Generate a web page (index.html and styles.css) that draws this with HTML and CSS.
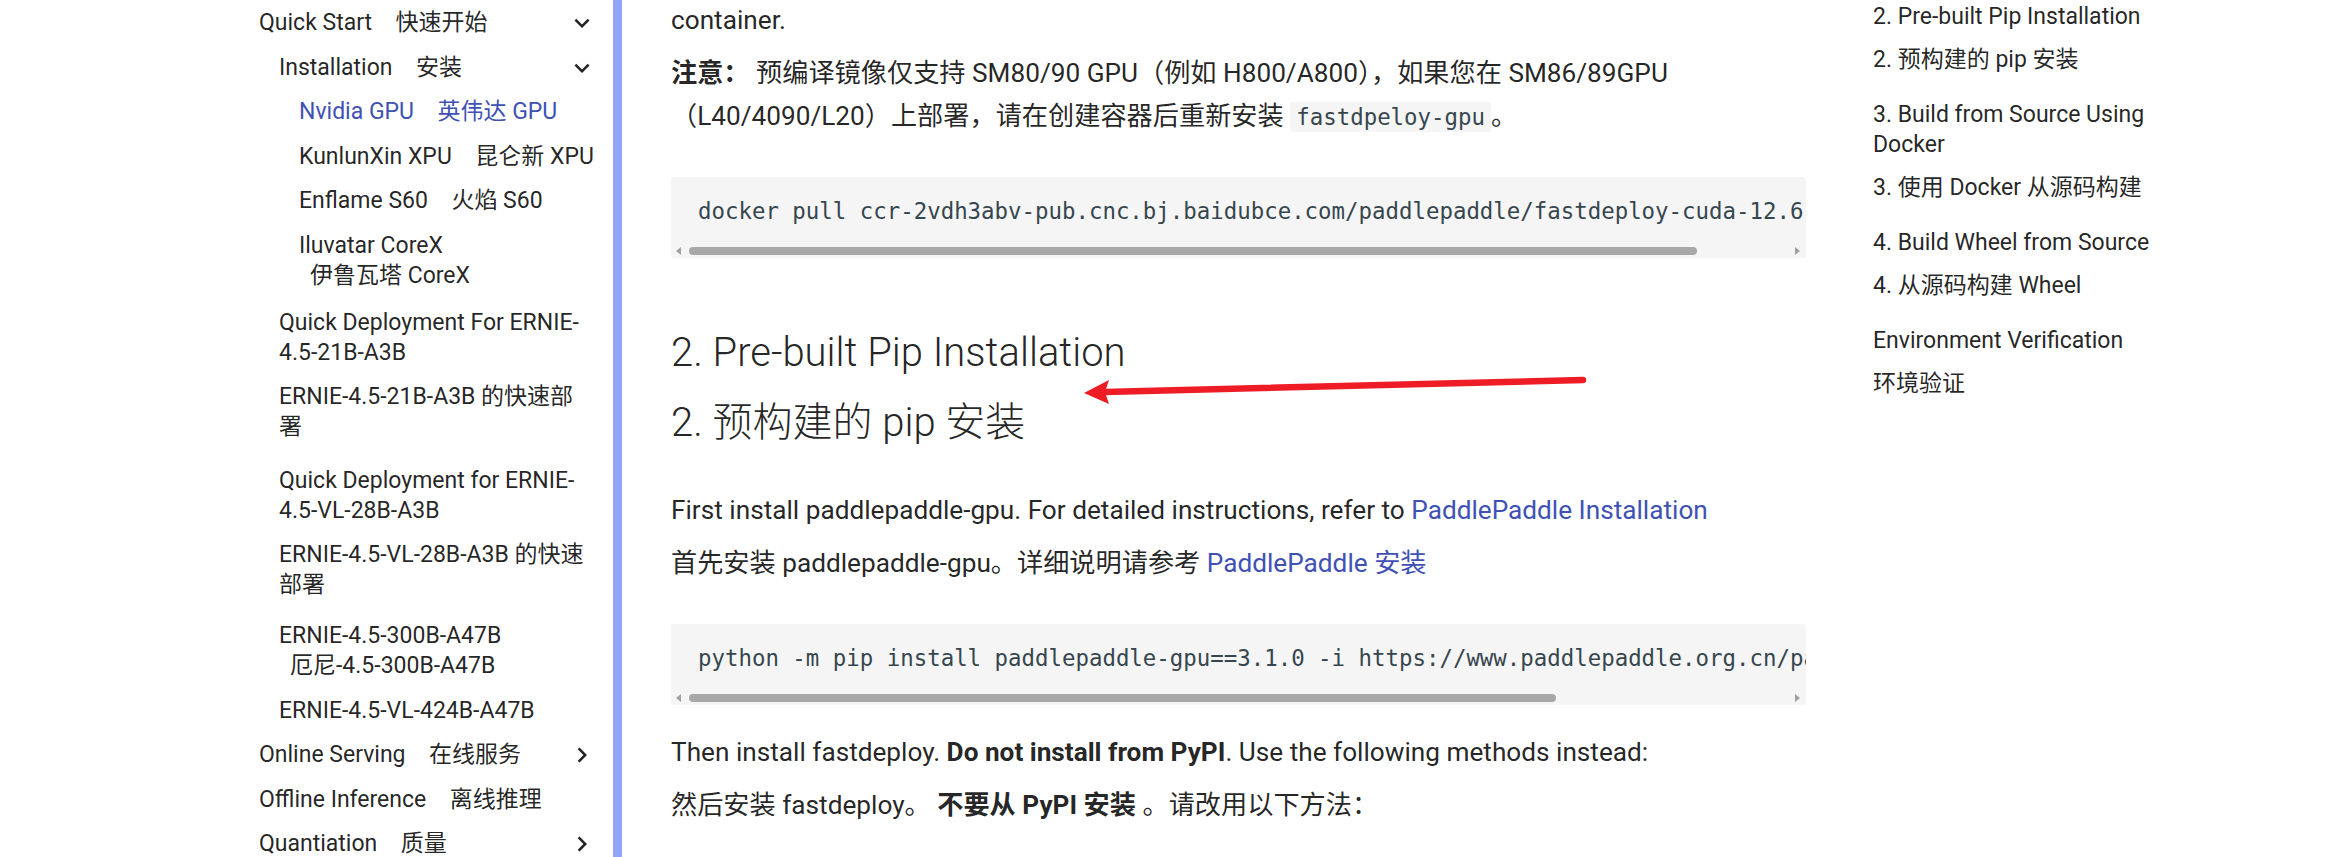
FILE: index.html
```html
<!DOCTYPE html>
<html lang="en">
<head>
<meta charset="utf-8">
<title>FastDeploy - Nvidia GPU</title>
<link rel="stylesheet" href="styles.css">
</head>
<body>
<div class="page">
  <div class="gutter"></div>

  <nav class="sidebar">
    <ul class="nav-list">
      <li class="nav-item">
        <div class="nav-link"><span class="label">Quick Start&emsp;快速开始</span>
          <svg class="chev" viewBox="0 0 24 24"><path d="M7.41 8.58 12 13.17l4.59-4.59L18 10l-6 6-6-6 1.41-1.42Z"/></svg></div>
        <ul class="nav-list sub">
          <li class="nav-item">
            <div class="nav-link"><span class="label">Installation&emsp;安装</span>
              <svg class="chev" viewBox="0 0 24 24"><path d="M7.41 8.58 12 13.17l4.59-4.59L18 10l-6 6-6-6 1.41-1.42Z"/></svg></div>
            <ul class="nav-list sub">
              <li class="nav-item"><div class="nav-link active"><span class="label">Nvidia GPU&emsp;英伟达 GPU</span></div></li>
              <li class="nav-item"><div class="nav-link"><span class="label">KunlunXin XPU&emsp;昆仑新 XPU</span></div></li>
              <li class="nav-item"><div class="nav-link"><span class="label">Enflame S60&emsp;火焰 S60</span></div></li>
              <li class="nav-item"><div class="nav-link"><span class="label">Iluvatar CoreX<br><span class="ind">伊鲁瓦塔 CoreX</span></span></div></li>
            </ul>
          </li>
          <li class="nav-item pair">
            <div class="nav-link"><span class="label">Quick Deployment For ERNIE-<br>4.5-21B-A3B<span class="zh">ERNIE-4.5-21B-A3B 的快速部<br>署</span></span></div>
          </li>
          <li class="nav-item pair">
            <div class="nav-link"><span class="label">Quick Deployment for ERNIE-<br>4.5-VL-28B-A3B<span class="zh">ERNIE-4.5-VL-28B-A3B 的快速<br>部署</span></span></div>
          </li>
          <li class="nav-item">
            <div class="nav-link"><span class="label">ERNIE-4.5-300B-A47B<br><span class="ind">厄尼-4.5-300B-A47B</span></span></div>
          </li>
          <li class="nav-item">
            <div class="nav-link"><span class="label">ERNIE-4.5-VL-424B-A47B</span></div>
          </li>
        </ul>
      </li>
      <li class="nav-item">
        <div class="nav-link"><span class="label">Online Serving&emsp;在线服务</span>
          <svg class="chev" viewBox="0 0 24 24"><path d="M8.59 16.58 13.17 12 8.59 7.41 10 6l6 6-6 6-1.41-1.42Z"/></svg></div>
      </li>
      <li class="nav-item">
        <div class="nav-link"><span class="label">Offline Inference&emsp;离线推理</span></div>
      </li>
      <li class="nav-item">
        <div class="nav-link"><span class="label">Quantiation&emsp;质量</span>
          <svg class="chev" viewBox="0 0 24 24"><path d="M8.59 16.58 13.17 12 8.59 7.41 10 6l6 6-6 6-1.41-1.42Z"/></svg></div>
      </li>
    </ul>
  </nav>
  <div class="sidebar-scroll"></div>

  <main class="content">
    <p class="first">container.</p>
    <p class="pair-p"><strong>注意：</strong> 预编译镜像仅支持 SM80/90 GPU（例如 H800/A800），如果您在 SM86/89GPU<br>（L40/4090/L20）上部署，请在创建容器后重新安装 <code>fastdpeloy-gpu</code>。</p>

    <div class="codeblock cb1">
      <pre><code>docker pull ccr-2vdh3abv-pub.cnc.bj.baidubce.com/paddlepaddle/fastdeploy-cuda-12.6:2.0.0</code></pre>
      <div class="hscroll"><span class="arr arr-l"></span><span class="thumb" style="width:1008px"></span><span class="arr arr-r"></span></div>
    </div>

    <h2><span class="h-en">2. Pre-built Pip Installation</span><span class="h-zh">2. 预构建的 pip 安装</span></h2>

    <p class="after-h">First install paddlepaddle-gpu. For detailed instructions, refer to <a href="#">PaddlePaddle Installation</a></p>
    <p class="pair-p">首先安装 paddlepaddle-gpu。详细说明请参考 <a href="#">PaddlePaddle 安装</a></p>

    <div class="codeblock cb2">
      <pre><code>python -m pip install paddlepaddle-gpu==3.1.0 -i https://www.paddlepaddle.org.cn/packages/stable/cu126/</code></pre>
      <div class="hscroll"><span class="arr arr-l"></span><span class="thumb" style="width:867px"></span><span class="arr arr-r"></span></div>
    </div>

    <p class="after-code">Then install fastdeploy. <strong>Do not install from PyPI</strong>. Use the following methods instead:</p>
    <p class="pair-p">然后安装 fastdeploy。 <strong>不要从 PyPI 安装</strong> 。请改用以下方法：</p>
  </main>

  <aside class="toc">
    <ul class="toc-list">
      <li class="toc-item"><span class="en">2. Pre-built Pip Installation</span><span class="zh">2. 预构建的 pip 安装</span></li>
      <li class="toc-item"><span class="en">3. Build from Source Using Docker</span><span class="zh">3. 使用 Docker 从源码构建</span></li>
      <li class="toc-item"><span class="en">4. Build Wheel from Source</span><span class="zh">4. 从源码构建 Wheel</span></li>
      <li class="toc-item"><span class="en">Environment Verification</span><span class="zh">环境验证</span></li>
    </ul>
  </aside>
</div>

<svg class="annotation" width="540" height="50" viewBox="0 0 540 50">
  <line x1="30" y1="22" x2="508" y2="10" stroke="#ee1c25" stroke-width="6.5" stroke-linecap="round"/>
  <polygon points="9,23 34,10 30,22 34,34" fill="#ee1c25"/>
</svg>
</body>
</html>
```

FILE: styles.css
```css
html, body {
  margin: 0;
  padding: 0;
  background: #ffffff;
}

body {
  font-family: Roboto, "Noto Sans CJK SC", sans-serif;
  color: rgba(0, 0, 0, 0.87);
  position: relative;
  -webkit-font-smoothing: antialiased;
}

.page {
  display: flex;
  align-items: flex-start;
  height: 857px;
  overflow: hidden;
}

.gutter {
  width: 247px;
  flex: none;
}

/* ---------- sidebar ---------- */
.sidebar {
  width: 366px;
  flex: none;
  box-sizing: border-box;
  padding: 8px 16px 0 12px;
  font-size: 23px;
  line-height: 30px;
}

.sidebar-scroll {
  width: 9px;
  height: 857px;
  flex: none;
  background: #94a3fb;
}

.nav-list {
  list-style: none;
  margin: 0;
  padding: 0;
  display: flex;
  flex-direction: column;
}

.nav-list.sub {
  padding-left: 20px;
}

.nav-item {
  margin-top: 14.5px;
  display: flex;
  flex-direction: column;
}

.sidebar > .nav-list > .nav-item:first-child {
  margin-top: 0;
}

.nav-item.pair {
  margin-top: 17px;
  margin-bottom: 7px;
}

.nav-link {
  display: flex;
  align-items: flex-start;
  color: rgba(0, 0, 0, 0.87);
}

.nav-link.active {
  color: #4051b5;
}

.nav-link .label {
  flex: 1;
  white-space: nowrap;
}

.nav-link .zh {
  display: block;
  margin-top: 14px;
}

.nav-link .ind {
  margin-left: 11px;
}

.chev {
  width: 30px;
  height: 30px;
  flex: none;
  fill: #222222;
}

/* ---------- content ---------- */
.content {
  width: 1135px;
  flex: none;
  margin-left: 49px;
  font-size: 26.2px;
  line-height: 43px;
}

.content p {
  margin: 0;
}

.content p.first {
  margin-top: -1px;
}

.content p.pair-p {
  margin-top: 10px;
}

.content p.after-h {
  margin-top: 38px;
}

.content p.after-code {
  margin-top: 26px;
}

.content strong {
  font-weight: 700;
}

.content a {
  color: #4051b5;
  text-decoration: none;
}

.content code {
  font-family: "DejaVu Sans Mono", monospace;
  font-size: 22.4px;
  color: #36464e;
}

.content p code {
  background: #f5f5f5;
  border-radius: 3px;
  padding: 2px 6px;
}

.codeblock {
  background: #f5f5f5;
  border-radius: 3px;
  height: 81px;
  box-sizing: border-box;
  overflow: hidden;
  display: flex;
  flex-direction: column;
}

.cb1 {
  margin-top: 38px;
}

.cb2 {
  margin-top: 39px;
}

.codeblock pre {
  margin: 0;
  padding: 18px 0 0 27px;
  height: 66px;
  box-sizing: border-box;
  overflow: hidden;
  white-space: pre;
  line-height: 31px;
}

.hscroll {
  height: 15px;
  display: flex;
  align-items: center;
  padding: 0 6px 0 5px;
}

.arr {
  width: 0;
  height: 0;
  border-top: 4px solid transparent;
  border-bottom: 4px solid transparent;
  flex: none;
}

.arr-l {
  border-right: 5px solid #a0a0a0;
}

.arr-r {
  border-left: 5px solid #a0a0a0;
  margin-left: auto;
}

.thumb {
  height: 8px;
  border-radius: 4px;
  background: #a8a8a8;
  margin-left: 8px;
  flex: none;
}

.content h2 {
  margin: 66px 0 0;
  font-size: 40px;
  font-weight: 300;
  line-height: 57px;
  color: rgba(0, 0, 0, 0.87);
}

.content h2 span {
  display: block;
}

.content h2 .h-zh {
  margin-top: 13px;
}

/* ---------- toc ---------- */
.toc {
  width: 290px;
  flex: none;
  margin-left: 67px;
  padding-top: 2px;
  font-size: 23px;
  line-height: 30px;
}

.toc-list {
  list-style: none;
  margin: 0;
  padding: 0;
}

.toc-item {
  margin-top: 25px;
}

.toc-item:first-child {
  margin-top: 0;
}

.toc-item span {
  display: block;
}

.toc-item .zh {
  margin-top: 13px;
}

/* ---------- annotation arrow ---------- */
.annotation {
  position: absolute;
  left: 1075px;
  top: 370px;
}
```
